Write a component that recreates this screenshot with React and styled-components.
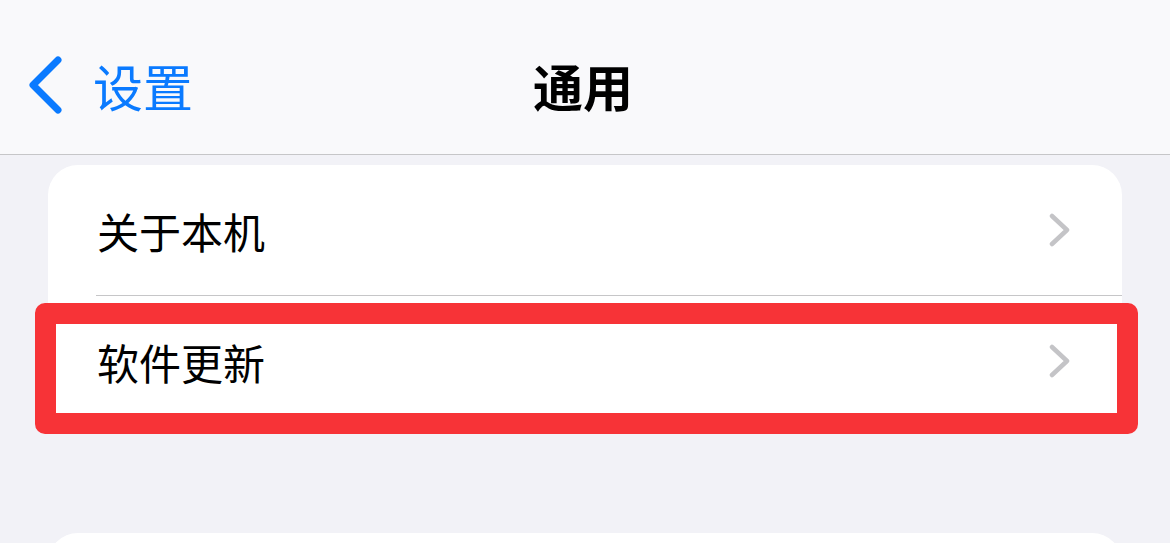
import styled, { createGlobalStyle } from 'styled-components'

const GlobalStyle = createGlobalStyle`
    html, body {
        margin: 0;
        padding: 0;
        background: #f2f2f7;
        font-family: "Noto Sans CJK SC", "Noto Sans", sans-serif;
        overflow: hidden;
    }
`

const Page = styled.div`
    width: 1170px;
    height: 543px;
    overflow: hidden;
    background: #f2f2f7;
`

const NavBar = styled.header`
    height: 155px;
    box-sizing: border-box;
    border-bottom: 1px solid #c6c6c8;
    background: #f9f9fb;
    display: grid;
    grid-template-columns: 1fr auto 1fr;
    align-items: center;
    padding-top: 16px;
`

const BackButton = styled.div`
    display: flex;
    align-items: center;
    gap: 27px;
    padding-left: 26px;
    color: #0a7aff;
    font-size: 50px;
    line-height: 1;
`

const Title = styled.h1`
    margin: 0 0 0 -4px;
    font-size: 50px;
    font-weight: 700;
    color: #000;
    line-height: 1;
`

const Section = styled.section`
    margin: ${p => p.$top}px 48px 0;
    background: #fff;
    border-radius: 30px;
    position: relative;
    min-height: ${p => p.$minHeight || 0}px;
`

const Row = styled.div`
    position: relative;
    height: 130px;
    display: flex;
    align-items: center;
    justify-content: space-between;
    padding: 0 51px 0 49px;
    font-size: 42px;
    color: #000;

    & + & {
        border-top: 1px solid #c6c6c8;
        margin-left: 48px;
        padding-left: 1px;
    }
`

const Highlight = styled.div`
    position: absolute;
    top: 7px;
    left: -61px;
    right: -16px;
    height: 131px;
    box-sizing: border-box;
    border: 21px solid #f73337;
    border-radius: 10px;
    pointer-events: none;
`

function BackChevron() {
    return (
        <svg width="40" height="60" viewBox="0 0 40 60">
            <path d="M32 5 L7 30 L32 55" fill="none" stroke="#0a7aff" strokeWidth="7" strokeLinecap="round" strokeLinejoin="round" />
        </svg>
    )
}

function Chevron() {
    return (
        <svg width="22" height="34" viewBox="0 0 22 34">
            <path d="M3 3 L18 17 L3 31" fill="none" stroke="#c4c4c7" strokeWidth="4.5" strokeLinecap="round" strokeLinejoin="round" />
        </svg>
    )
}

function App() {
    return (
        <Page>
            <GlobalStyle />
            <NavBar>
                <BackButton>
                    <BackChevron />
                    <span>设置</span>
                </BackButton>
                <Title>通用</Title>
                <div />
            </NavBar>
            <Section $top={10}>
                <Row>
                    <span>关于本机</span>
                    <Chevron />
                </Row>
                <Row>
                    <span>软件更新</span>
                    <Chevron />
                    <Highlight />
                </Row>
            </Section>
            <Section $top={107} $minHeight={130} />
        </Page>
    )
}

export default App
